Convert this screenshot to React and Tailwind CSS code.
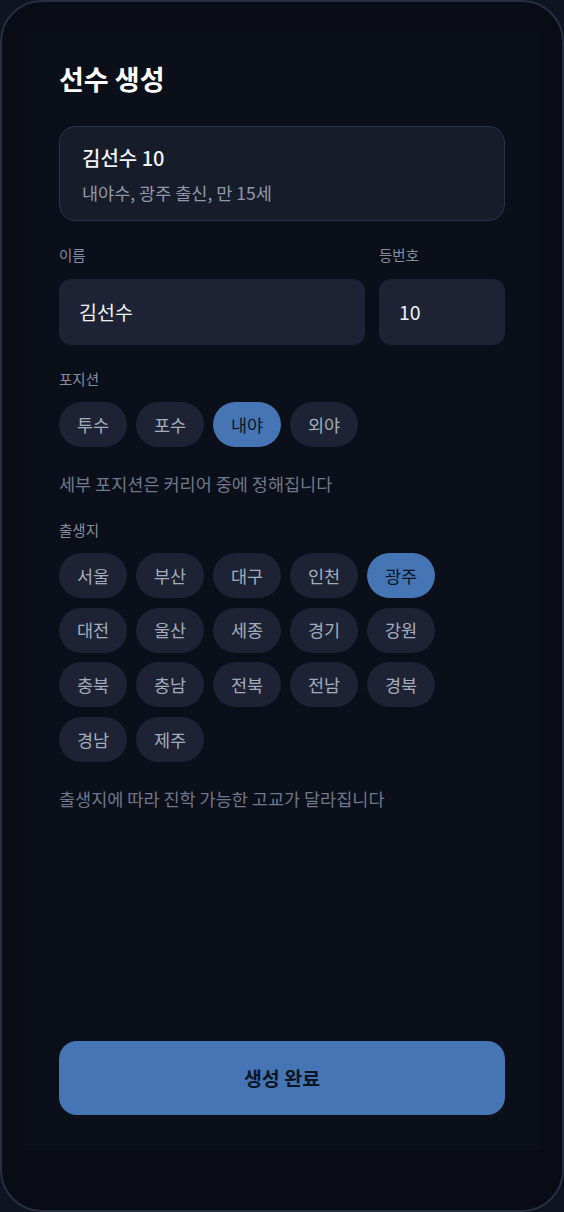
const positions = ['투수', '포수', '내야', '외야']
const regions = [
  '서울', '부산', '대구', '인천', '광주',
  '대전', '울산', '세종', '경기', '강원',
  '충북', '충남', '전북', '전남', '경북',
  '경남', '제주',
]

function Chip({ label, active }) {
  return (
    <button
      className={`h-[45px] w-[68px] rounded-full text-[17.5px] leading-none ${
        active ? 'bg-[#4575b5] text-[#0d1422]' : 'bg-[#1d2334] text-[#a4acbc]'
      }`}
    >
      {label}
    </button>
  )
}

function Label({ children }) {
  return <p className="text-[14.5px] leading-[20px] text-[#858ea1]">{children}</p>
}

export default function App() {
  return (
    <div
      className="min-h-screen bg-[#0f1421]"
      style={{ fontFamily: '"Noto Sans CJK KR", "Noto Sans", sans-serif' }}
    >
      <div className="h-[1212px] rounded-[42px] border-2 border-[#262e42] bg-[#090c14] px-[22px] pt-[30px]">
        <div className="flex h-[1118px] flex-col bg-[#0b0f19] px-[35px] pt-[31px] pb-[35px]">
          <h1 className="text-[27px] leading-[32px] font-bold text-white">선수 생성</h1>

          {/* Preview card */}
          <div className="mt-[31px] rounded-[16px] border border-[#2a3247] bg-[#171c2b] px-[22px] pt-[18px] pb-[15px]">
            <p className="text-[20px] leading-[26px] font-medium text-[#f1f3f7]">김선수 10</p>
            <p className="mt-[10px] text-[17.5px] leading-[24px] text-[#8f98aa]">내야수, 광주 출신, 만 15세</p>
          </div>

          {/* Name + number */}
          <div className="mt-[24px] flex gap-[14px]">
            <div className="flex-1">
              <Label>이름</Label>
              <div className="mt-[14px] flex h-[66px] items-center rounded-[12px] bg-[#1d2334] px-[20px] text-[19.5px] text-[#eef0f4]">
                김선수
              </div>
            </div>
            <div className="w-[126px]">
              <Label>등번호</Label>
              <div className="mt-[14px] flex h-[66px] items-center rounded-[12px] bg-[#1d2334] px-[20px] text-[19.5px] text-[#eef0f4]">
                10
              </div>
            </div>
          </div>

          {/* Position */}
          <div className="mt-[24px]">
            <Label>포지션</Label>
            <div className="mt-[13px] flex gap-[9px]">
              {positions.map(p => <Chip key={p} label={p} active={p === '내야'} />)}
            </div>
            <p className="mt-[25px] text-[17.5px] leading-[24px] text-[#6f788c]">세부 포지션은 커리어 중에 정해집니다</p>
          </div>

          {/* Birthplace */}
          <div className="mt-[24px]">
            <Label>출생지</Label>
            <div className="mt-[13px] flex w-[380px] flex-wrap gap-x-[9px] gap-y-[9.6px]">
              {regions.map(r => <Chip key={r} label={r} active={r === '광주'} />)}
            </div>
            <p className="mt-[25px] text-[17.5px] leading-[24px] text-[#6f788c]">출생지에 따라 진학 가능한 고교가 달라집니다</p>
          </div>

          <button className="mt-auto h-[74px] w-full rounded-[18px] bg-[#4575b5] text-[19.5px] font-semibold text-[#0d1422]">
            생성 완료
          </button>
        </div>
      </div>
    </div>
  )
}
